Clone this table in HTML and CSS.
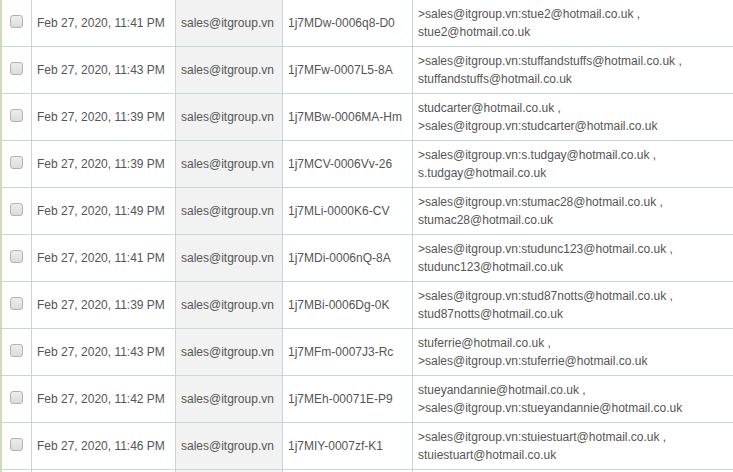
FILE: index.html
```html
<!DOCTYPE html>
<html lang="en">
<head>
    <meta charset="UTF-8">
    <meta name="viewport" content="width=device-width, initial-scale=1.0">
    <title>Mail queue</title>
    <link rel="stylesheet" href="styles.css">
</head>
<body>
    <div class="wrap">
        <table class="queue">
            <colgroup>
                <col class="c-check">
                <col class="c-date">
                <col class="c-from">
                <col class="c-id">
                <col class="c-to">
            </colgroup>
            <tbody>
                <tr>
                    <td class="check"><input type="checkbox"></td>
                    <td>Feb 27, 2020, 11:41 PM</td>
                    <td class="from">sales@itgroup.vn</td>
                    <td>1j7MDw-0006q8-D0</td>
                    <td>&gt;sales@itgroup.vn:stue2@hotmail.co.uk ,<br>stue2@hotmail.co.uk</td>
                </tr>
                <tr>
                    <td class="check"><input type="checkbox"></td>
                    <td>Feb 27, 2020, 11:43 PM</td>
                    <td class="from">sales@itgroup.vn</td>
                    <td>1j7MFw-0007L5-8A</td>
                    <td>&gt;sales@itgroup.vn:stuffandstuffs@hotmail.co.uk ,<br>stuffandstuffs@hotmail.co.uk</td>
                </tr>
                <tr>
                    <td class="check"><input type="checkbox"></td>
                    <td>Feb 27, 2020, 11:39 PM</td>
                    <td class="from">sales@itgroup.vn</td>
                    <td>1j7MBw-0006MA-Hm</td>
                    <td>studcarter@hotmail.co.uk ,<br>&gt;sales@itgroup.vn:studcarter@hotmail.co.uk</td>
                </tr>
                <tr>
                    <td class="check"><input type="checkbox"></td>
                    <td>Feb 27, 2020, 11:39 PM</td>
                    <td class="from">sales@itgroup.vn</td>
                    <td>1j7MCV-0006Vv-26</td>
                    <td>&gt;sales@itgroup.vn:s.tudgay@hotmail.co.uk ,<br>s.tudgay@hotmail.co.uk</td>
                </tr>
                <tr>
                    <td class="check"><input type="checkbox"></td>
                    <td>Feb 27, 2020, 11:49 PM</td>
                    <td class="from">sales@itgroup.vn</td>
                    <td>1j7MLi-0000K6-CV</td>
                    <td>&gt;sales@itgroup.vn:stumac28@hotmail.co.uk ,<br>stumac28@hotmail.co.uk</td>
                </tr>
                <tr>
                    <td class="check"><input type="checkbox"></td>
                    <td>Feb 27, 2020, 11:41 PM</td>
                    <td class="from">sales@itgroup.vn</td>
                    <td>1j7MDi-0006nQ-8A</td>
                    <td>&gt;sales@itgroup.vn:studunc123@hotmail.co.uk ,<br>studunc123@hotmail.co.uk</td>
                </tr>
                <tr>
                    <td class="check"><input type="checkbox"></td>
                    <td>Feb 27, 2020, 11:39 PM</td>
                    <td class="from">sales@itgroup.vn</td>
                    <td>1j7MBi-0006Dg-0K</td>
                    <td>&gt;sales@itgroup.vn:stud87notts@hotmail.co.uk ,<br>stud87notts@hotmail.co.uk</td>
                </tr>
                <tr>
                    <td class="check"><input type="checkbox"></td>
                    <td>Feb 27, 2020, 11:43 PM</td>
                    <td class="from">sales@itgroup.vn</td>
                    <td>1j7MFm-0007J3-Rc</td>
                    <td>stuferrie@hotmail.co.uk ,<br>&gt;sales@itgroup.vn:stuferrie@hotmail.co.uk</td>
                </tr>
                <tr>
                    <td class="check"><input type="checkbox"></td>
                    <td>Feb 27, 2020, 11:42 PM</td>
                    <td class="from">sales@itgroup.vn</td>
                    <td>1j7MEh-00071E-P9</td>
                    <td>stueyandannie@hotmail.co.uk ,<br>&gt;sales@itgroup.vn:stueyandannie@hotmail.co.uk</td>
                </tr>
                <tr>
                    <td class="check"><input type="checkbox"></td>
                    <td>Feb 27, 2020, 11:46 PM</td>
                    <td class="from">sales@itgroup.vn</td>
                    <td>1j7MIY-0007zf-K1</td>
                    <td>&gt;sales@itgroup.vn:stuiestuart@hotmail.co.uk ,<br>stuiestuart@hotmail.co.uk</td>
                </tr>
                <tr class="more">
                    <td class="check"></td>
                    <td></td>
                    <td class="from"></td>
                    <td></td>
                    <td></td>
                </tr>
            </tbody>
        </table>
    </div>
</body>
</html>
```

FILE: styles.css
```css
body {
    margin: 0;
    padding: 0;
    background-color: #fff;
    font-family: "Liberation Sans", Arial, sans-serif;
    font-size: 12px;
    color: #555;
    overflow: hidden;
}

.wrap {
    width: 900px;
}

.queue {
    border-collapse: separate;
    border-spacing: 0;
    table-layout: fixed;
    width: 900px;
    border-left: 2px solid #c9ddbb;
}

.c-check { width: 30px; }
.c-date { width: 144px; }
.c-from { width: 107px; }
.c-id { width: 130px; }
.c-to { width: 487px; }

.queue td {
    padding: 5px;
    line-height: 18px;
    vertical-align: middle;
    text-align: left;
    white-space: nowrap;
    border-right: 1px solid #c7d5d8;
    border-bottom: 1px solid #c7d5d8;
}

.queue tr.more td {
    height: 36px;
}

.queue td.from {
    background-color: #f2f2f2;
}

.queue td.check {
    text-align: center;
    padding: 0;
}

.check input {
    -webkit-appearance: none;
    appearance: none;
    display: block;
    width: 13px;
    height: 13px;
    margin: -3px auto 0;
    border: 1px solid #b3b3b3;
    border-radius: 3px;
    background: linear-gradient(#ededed, #dcdcdc);
}
```
